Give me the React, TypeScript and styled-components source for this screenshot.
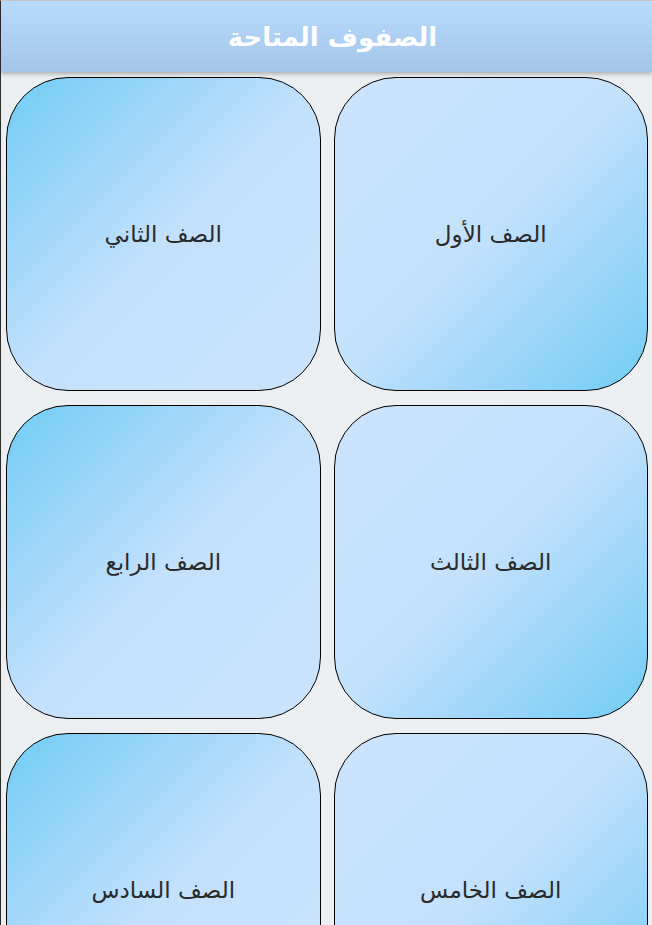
import React from "react";
import styled, { createGlobalStyle } from "styled-components";

const Global = createGlobalStyle`
  html, body { margin: 0; padding: 0; background: #eceff1; }
  body { font-family: "DejaVu Sans", "Noto Sans", sans-serif; overflow: hidden; }
`;

const Page = styled.div`
  direction: rtl;
  width: 652px;
  height: 925px;
  box-sizing: border-box;
  border-left: 1px solid #2a2a2a;
  border-top: 1px solid #c4c4c4;
  background: #eceff1;
  overflow: hidden;
`;

const Header = styled.header`
  height: 71px;
  display: flex;
  align-items: center;
  justify-content: center;
  padding-left: 12px;
  background: linear-gradient(to bottom, #b8dbfc, #a4c5e8);
  box-shadow: 0 2px 4px rgba(0, 0, 0, 0.28);
  position: relative;
  z-index: 1;
`;

const Title = styled.h1`
  margin: 0;
  color: #ffffff;
  font-size: 26px;
  font-weight: bold;
  letter-spacing: 0.2px;
  font-family: "DejaVu Sans", sans-serif;
`;

const Grid = styled.div`
  display: grid;
  grid-template-columns: 1fr 1fr;
  column-gap: 13px;
  row-gap: 14px;
  padding: 5px 4px 0 5px;
`;

const Card = styled.div<{ $mirror: boolean }>`
  height: 314px;
  box-sizing: border-box;
  border: 1.5px solid #000;
  border-radius: 62px;
  display: flex;
  align-items: center;
  justify-content: center;
  background: ${(p) =>
    p.$mirror
      ? "linear-gradient(135deg, #72cdf4 0%, #9ed6f9 28%, #c4e1fc 52%, #cbe4fc 100%)"
      : "linear-gradient(135deg, #cbe4fc 0%, #c4e1fc 48%, #9ed6f9 72%, #72cdf4 100%)"};
`;

const Label = styled.span`
  font-size: 23px;
  color: #2a2a2a;
  font-family: "DejaVu Sans", sans-serif;
`;

const grades = [
  "الصف الأول",
  "الصف الثاني",
  "الصف الثالث",
  "الصف الرابع",
  "الصف الخامس",
  "الصف السادس",
];

export default function App() {
  return (
    <>
      <Global />
      <Page>
        <Header>
          <Title>الصفوف المتاحة</Title>
        </Header>
        <Grid>
          {grades.map((g, i) => (
            <Card key={g} $mirror={i % 2 === 1}>
              <Label>{g}</Label>
            </Card>
          ))}
        </Grid>
      </Page>
    </>
  );
}
